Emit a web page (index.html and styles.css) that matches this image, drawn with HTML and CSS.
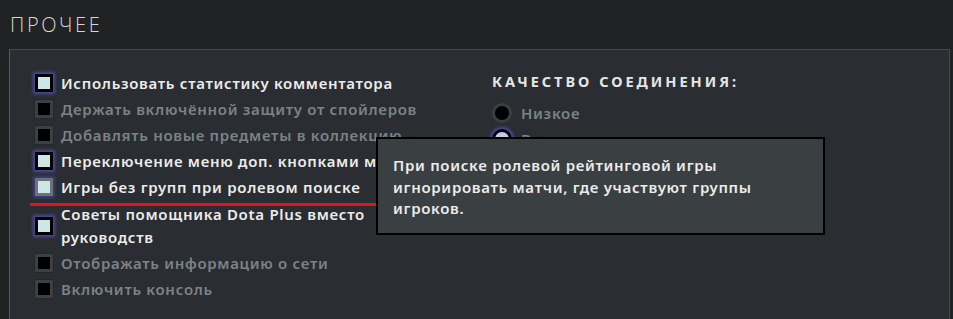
FILE: index.html
```html
<!DOCTYPE html>
<html lang="ru">
<head>
<meta charset="utf-8">
<title>Прочее</title>
<link rel="stylesheet" href="styles.css">
</head>
<body>
<h1 class="title">ПРОЧЕЕ</h1>
<section class="panel">
  <div class="cols">
    <ul class="options">
      <li class="opt on"><span class="box"></span><span class="label">Использовать статистику комментатора</span></li>
      <li class="opt"><span class="box"></span><span class="label">Держать включённой защиту от спойлеров</span></li>
      <li class="opt"><span class="box"></span><span class="label">Добавлять новые предметы в коллекцию</span></li>
      <li class="opt on"><span class="box"></span><span class="label">Переключение меню доп. кнопками мыши</span></li>
      <li class="opt on hover"><span class="box"></span><span class="label">Игры без групп при ролевом поиске</span></li>
      <li class="opt on multi"><span class="box"></span><span class="label">Советы помощника Dota Plus вместо<br>руководств</span></li>
      <li class="opt"><span class="box"></span><span class="label">Отображать информацию о сети</span></li>
      <li class="opt"><span class="box"></span><span class="label">Включить консоль</span></li>
    </ul>
    <div class="quality">
      <h2 class="qtitle">КАЧЕСТВО СОЕДИНЕНИЯ:</h2>
      <ul class="radios">
        <li class="radio"><span class="dot"></span><span class="rlabel">Низкое</span></li>
        <li class="radio sel"><span class="dot"></span><span class="rlabel">Высокое</span></li>
      </ul>
    </div>
  </div>
  <div class="redline"></div>
  <div class="tooltip">При поиске ролевой рейтинговой игры<br>игнорировать матчи, где участвуют группы<br>игроков.</div>
</section>
</body>
</html>
```
FILE: styles.css
```css
html, body {
  margin: 0;
  padding: 0;
  background: #212224;
  height: 100%;
  overflow: hidden;
}
body {
  font-family: "Noto Sans", "Open Sans", sans-serif;
}
.title {
  margin: 0;
  padding: 12px 0 0 10px;
  height: 37px;
  font-family: "Open Sans", sans-serif;
  font-weight: 300;
  font-size: 20px;
  letter-spacing: 2.6px;
  color: #d6d6d6;
  line-height: 26px;
}
.panel {
  position: relative;
  margin: 0 3px 0 9px;
  height: 280px;
  background: #2a2d31;
  border-top: 1px solid #45484c;
  border-left: 1px solid #3b5f8e;
  border-right: 1px solid #45484c;
  box-sizing: border-box;
}
.cols {
  display: flex;
  padding: 21px 0 0 24px;
}
.options {
  list-style: none;
  margin: 0;
  padding: 0;
  width: 458px;
  display: flex;
  flex-direction: column;
  gap: 1.9px;
}
.opt {
  display: flex;
  align-items: center;
  gap: 8px;
  font-size: 15px;
  font-weight: 600;
  letter-spacing: 0.7px;
  line-height: 24px;
  color: #7c8387;
  white-space: nowrap;
}
.opt.multi {
  line-height: 23px;
  padding-top: 3px;
}
.opt.on { color: #ececec; }
.box {
  flex: none;
  width: 18px;
  height: 18px;
  box-sizing: border-box;
  border: 3px solid #3b4043;
  background: #000;
  box-shadow: 0 0 0 1px #23262a;
  margin-left: 1px;
}
.opt.on .box {
  border-color: #000;
  background: #cde6e6;
  box-shadow: 0 0 3px 2px #4b4b9c;
}
.opt.hover .box {
  border-color: #6a7476;
  background: #cfe6e6;
  box-shadow: 0 0 3px 2px #3f3f7c;
}
.qtitle {
  margin: 0;
  font-size: 14.5px;
  font-weight: 700;
  letter-spacing: 3px;
  color: #e6e6e6;
  line-height: 20px;
}
.radios {
  list-style: none;
  margin: 12px 0 0;
  padding: 0;
  display: flex;
  flex-direction: column;
  gap: 6px;
}
.radio {
  display: flex;
  align-items: center;
  gap: 9px;
  font-size: 15px;
  font-weight: 600;
  letter-spacing: 0.7px;
  color: #7c8387;
  line-height: 20px;
}
.dot {
  width: 20px;
  height: 20px;
  border-radius: 50%;
  box-sizing: border-box;
  border: 3px solid #3a3e41;
  background: #000;
}
.radio.sel .dot {
  border-color: #000;
  background: #c7c9e8;
  box-shadow: 0 0 3px 2px #4b4b9c;
}
.redline {
  position: absolute;
  left: 20px;
  top: 153px;
  width: 349px;
  height: 3px;
  background: #e0141e;
}
.tooltip {
  position: absolute;
  left: 366px;
  top: 87px;
  width: 449px;
  height: 98px;
  box-sizing: border-box;
  border: 2px solid #000;
  background: #3a3f41;
  padding: 16px 0 0 15px;
  font-size: 15px;
  font-weight: 600;
  letter-spacing: 0.7px;
  line-height: 21.5px;
  color: #ececec;
}
```
